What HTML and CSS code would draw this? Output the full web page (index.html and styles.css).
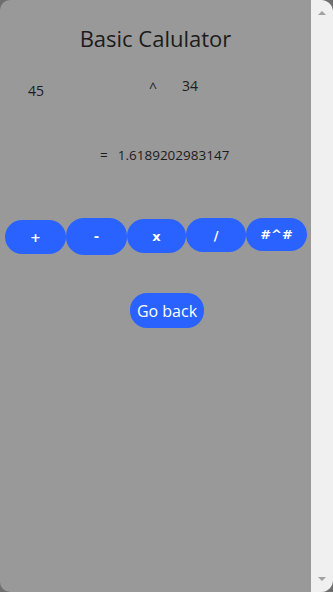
FILE: index.html
```html
<!DOCTYPE html>
<html>
<head>
<meta charset="utf-8">
<link rel="stylesheet" href="styles.css">
</head>
<body>
<div class="frame">
  <main class="page">
    <h1 class="title">Basic Calulator</h1>
    <div class="inputs">
      <span class="num first">45</span>
      <span class="op">^</span>
      <span class="num second">34</span>
    </div>
    <div class="result"><span class="eq">=</span><span>1.6189202983147</span></div>
    <div class="ops">
      <button class="opbtn b1">+</button>
      <button class="opbtn b2">-</button>
      <button class="opbtn b3">x</button>
      <button class="opbtn b4">/</button>
      <button class="opbtn b5">#^#</button>
    </div>
    <div class="back-row"><button class="back">Go back</button></div>
  </main>
  <div class="scrollbar">
    <svg class="arrow" width="10" height="6" viewBox="0 0 10 6"><path d="M1 5 L5 1 L9 5 Z" fill="#a0a0a0"/></svg>
    <div class="track"></div>
    <svg class="arrow" width="10" height="6" viewBox="0 0 10 6"><path d="M1 1 L5 5 L9 1 Z" fill="#a0a0a0"/></svg>
  </div>
</div>
</body>
</html>
```
FILE: styles.css
```css
html, body {
  margin: 0;
  padding: 0;
  background: #6e6e6e;
  height: 100%;
}
.frame {
  display: flex;
  height: 592px;
  width: 333px;
  background: #999999;
  border-radius: 10px 12px 12px 10px;
  overflow: hidden;
}
.page {
  width: 311px;
  flex: none;
  font-family: "Open Sans", "Noto Sans", sans-serif;
  color: #1c1c1c;
}
.title {
  margin: 22px 0 0 0;
  font-size: 22px;
  font-weight: 400;
  text-align: center;
  line-height: 32px;
}
.inputs {
  display: flex;
  align-items: flex-start;
  font-size: 14px;
  margin-top: 22px;
  height: 30px;
}
.num.first { margin-left: 28px; margin-top: 5px; }
.op { margin-left: 105px; margin-top: 2px; }
.num.second { margin-left: 25px; }
.result {
  display: flex;
  gap: 10px;
  margin-top: 40px;
  margin-left: 100px;
  font-size: 13.5px;
}
.ops {
  display: flex;
  margin: 54px 0 0 5px;
  align-items: flex-start;
}
.opbtn {
  width: 61px;
  height: 34px;
  border: none;
  border-radius: 17px;
  background: #2962ff;
  color: #ffffff;
  font-family: "DejaVu Sans", Verdana, sans-serif;
  font-weight: bold;
  font-size: 13px;
  padding: 0;
}
.b1 { margin-top: 2px; }
.b2 { height: 37px; border-radius: 18px; }
.b3 { margin-top: 1px; width: 59px; }
.b4 { width: 60px; }
.b5 { height: 33px; }
.back-row {
  margin-top: 38px;
  padding-left: 130px;
}
.back {
  border: none;
  background: #2962ff;
  color: #ffffff;
  font-family: "Open Sans", "Noto Sans", sans-serif;
  font-size: 16px;
  height: 35px;
  width: 74px;
  padding: 0;
  border-radius: 17px;
}
.scrollbar {
  width: 22px;
  flex: none;
  background: #f0f0f0;
  display: flex;
  flex-direction: column;
  align-items: center;
  padding: 10px 0 10px 0;
  box-sizing: border-box;
}
.track { flex: 1; }
.arrow { display: block; }
```
